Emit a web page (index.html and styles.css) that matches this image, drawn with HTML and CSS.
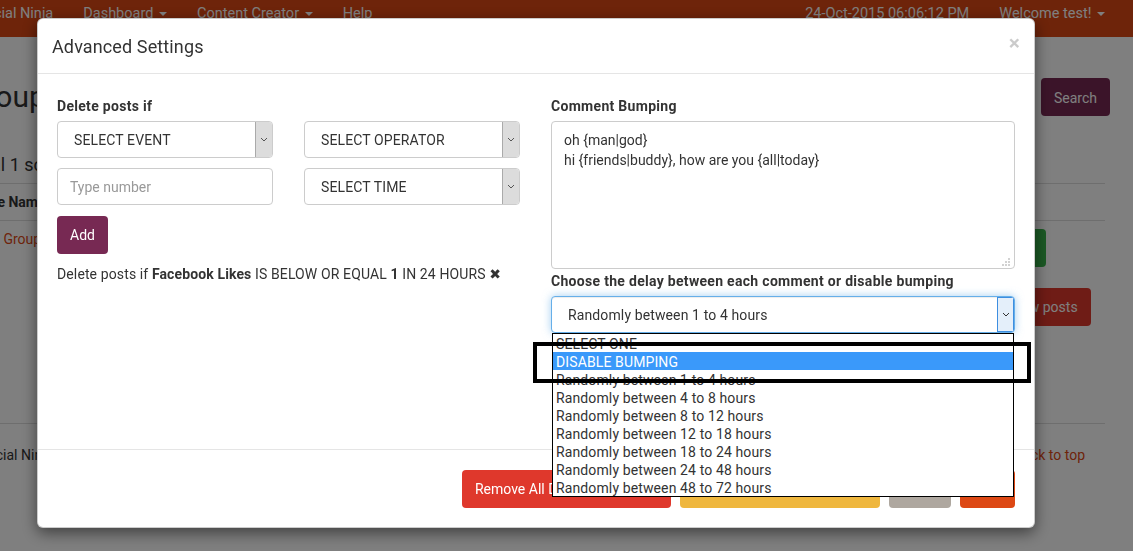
FILE: index.html
```html
<!DOCTYPE html>
<html lang="en">
<head>
  <meta charset="UTF-8">
  <meta name="viewport" content="width=device-width, initial-scale=1.0">
  <title>Social Ninja - Groups</title>
  <link rel="stylesheet" href="styles.css">
</head>
<body>

<div class="page">
  <nav class="navbar">
    <a class="brand">Social Ninja</a>
    <ul class="nav">
      <li><a>Dashboard <span class="caret"></span></a></li>
      <li><a>Content Creator <span class="caret"></span></a></li>
      <li><a>Help</a></li>
    </ul>
    <ul class="nav nav-right">
      <li><a>24-Oct-2015 06:06:12 PM</a></li>
      <li><a>Welcome test! <span class="caret"></span></a></li>
    </ul>
  </nav>

  <div class="container">
    <div class="title-row">
      <h1>Group</h1>
      <div class="search">
        <input type="text" placeholder="Search groups...">
        <button class="btn btn-purple">Search</button>
      </div>
    </div>

    <p class="total">Total 1 schedule found</p>

    <div class="table">
      <div class="thead">
        <div class="cell">Page Name</div>
        <div class="cell">Schedule</div>
        <div class="cell">Status</div>
        <div class="cell">Edit</div>
      </div>
      <div class="trow">
        <div class="cell"><a>Test Group</a></div>
        <div class="cell">Every 2 hours</div>
        <div class="cell">Running</div>
        <div class="cell actions">
          <button class="btn btn-green">Edit</button>
          <button class="btn btn-red">View posts</button>
        </div>
      </div>
    </div>

    <footer class="footer">
      <span>&copy; Social Ninja</span>
      <a>Back to top</a>
    </footer>
  </div>
</div>

<div class="backdrop"></div>

<div class="modal">
  <div class="modal-header">
    <h4>Advanced Settings</h4>
    <button class="close">&times;</button>
  </div>

  <div class="modal-body">
    <div class="col">
      <label class="field-label">Delete posts if</label>
      <div class="rule-grid">
        <div class="select">
          <span class="value">SELECT EVENT</span>
          <span class="arrow"><svg width="8" height="5" viewBox="0 0 8 5"><path d="M1 1l3 3 3-3" fill="none" stroke="#555" stroke-width="1"/></svg></span>
        </div>
        <div class="select">
          <span class="value">SELECT OPERATOR</span>
          <span class="arrow"><svg width="8" height="5" viewBox="0 0 8 5"><path d="M1 1l3 3 3-3" fill="none" stroke="#555" stroke-width="1"/></svg></span>
        </div>
        <input class="input" type="text" placeholder="Type number">
        <div class="select">
          <span class="value">SELECT TIME</span>
          <span class="arrow"><svg width="8" height="5" viewBox="0 0 8 5"><path d="M1 1l3 3 3-3" fill="none" stroke="#555" stroke-width="1"/></svg></span>
        </div>
      </div>
      <button class="btn btn-purple btn-add">Add</button>
      <p class="rule">Delete posts if <b>Facebook Likes</b> IS BELOW OR EQUAL <b>1</b> IN 24 HOURS <span class="remove">&#10006;</span></p>
    </div>

    <div class="col">
      <label class="field-label">Comment Bumping</label>
      <div class="textarea-wrap">
        <textarea class="textarea">oh {man|god}
hi {friends|buddy}, how are you {all|today}</textarea>
        <svg class="grip" width="8" height="8" viewBox="0 0 8 8">
          <circle cx="7" cy="1" r="0.8"/><circle cx="4" cy="4" r="0.8"/><circle cx="7" cy="4" r="0.8"/>
          <circle cx="1" cy="7" r="0.8"/><circle cx="4" cy="7" r="0.8"/><circle cx="7" cy="7" r="0.8"/>
        </svg>
      </div>
      <label class="field-label delay-label">Choose the delay between each comment or disable bumping</label>
      <div class="dropdown">
        <div class="select focused">
          <span class="value">Randomly between 1 to 4 hours</span>
          <span class="arrow"><svg width="8" height="5" viewBox="0 0 8 5"><path d="M1 1l3 3 3-3" fill="none" stroke="#333" stroke-width="1"/></svg></span>
        </div>
        <ul class="options">
          <li>SELECT ONE</li>
          <li class="active">DISABLE BUMPING</li>
          <li>Randomly between 1 to 4 hours</li>
          <li>Randomly between 4 to 8 hours</li>
          <li>Randomly between 8 to 12 hours</li>
          <li>Randomly between 12 to 18 hours</li>
          <li>Randomly between 18 to 24 hours</li>
          <li>Randomly between 24 to 48 hours</li>
          <li>Randomly between 48 to 72 hours</li>
        </ul>
      </div>
    </div>
  </div>

  <div class="modal-footer">
    <button class="btn btn-red">Remove All Delete Conditions</button>
    <button class="btn btn-yellow">Remove Comment Bumping</button>
    <button class="btn btn-gray">Close</button>
    <button class="btn btn-orange">Save</button>
  </div>

  <div class="callout"></div>
</div>

</body>
</html>
```

FILE: styles.css
```css
* {
  box-sizing: border-box;
}
html, body {
  margin: 0;
  height: 100%;
}
body {
  font-family: Roboto, "Open Sans", sans-serif;
  font-size: 14px;
  line-height: 20px;
  color: #333;
  background: #fff;
  overflow: hidden;
}
a {
  color: #dd4814;
  text-decoration: none;
}
ul {
  margin: 0;
  padding: 0;
  list-style: none;
}

/* page behind the modal */
.navbar {
  display: flex;
  align-items: flex-start;
  height: 37px;
  padding: 1px 13px 0 0;
  background: #dd4814;
  font-size: 14.5px;
  line-height: 26px;
}
.navbar a {
  color: #fff;
  display: block;
  padding: 0 15px;
}
.brand {
  margin-left: -38px;
}
.nav {
  display: flex;
}
.nav-right {
  margin-left: auto;
}
.caret {
  display: inline-block;
  width: 0;
  height: 0;
  margin-left: 2px;
  vertical-align: middle;
  border-top: 4px solid;
  border-left: 4px solid transparent;
  border-right: 4px solid transparent;
}

.container {
  margin: 0 28px 0 -35px;
}
.title-row {
  display: flex;
  justify-content: space-between;
  align-items: center;
  margin-top: 41px;
  height: 37px;
}
.title-row h1 {
  margin: 0;
  font-size: 30px;
  font-weight: 400;
  line-height: 37px;
}
.search {
  display: flex;
  gap: 8px;
  margin-right: -5px;
}
.search input {
  width: 220px;
  border: 1px solid #ccc;
  border-radius: 4px;
  padding: 0 12px;
  font: inherit;
}
.search .btn {
  padding-top: 10px;
  padding-bottom: 8px;
}
.total {
  margin: 40px 0 8px;
  font-size: 18px;
}
.table {
  border-top: 1px solid #ddd;
}
.thead,
.trow {
  display: grid;
  grid-template-columns: 2fr 1fr 1fr 117px;
  border-bottom: 1px solid #ddd;
}
.thead {
  font-weight: 700;
}
.trow {
  min-height: 203px;
}
.cell {
  padding: 8px;
}
.actions {
  display: flex;
  flex-direction: column;
  align-items: flex-start;
  gap: 21px;
}
.footer {
  display: flex;
  justify-content: space-between;
  padding: 21px 20px 0 0;
}

/* buttons */
.btn {
  font: inherit;
  line-height: 20px;
  padding: 9px 13px;
  border: none;
  border-radius: 4px;
  color: #fff;
  cursor: pointer;
}
.btn-purple { background: #772953; }
.btn-green  { background: #38b44a; }
.btn-red    { background: #df382c; }
.btn-yellow { background: #efb73e; }
.btn-gray   { background: #aea79f; }
.btn-orange { background: #dd4814; }

.backdrop {
  position: fixed;
  inset: 0;
  background: rgba(0, 0, 0, 0.5);
}

/* modal */
.modal {
  position: fixed;
  top: 18px;
  left: 37px;
  width: 998px;
  background: #fff;
  border: 1px solid rgba(0, 0, 0, 0.2);
  border-radius: 6px;
  box-shadow: 0 5px 15px rgba(0, 0, 0, 0.5);
  letter-spacing: 0.12px;
}
.modal-header {
  display: flex;
  justify-content: space-between;
  align-items: center;
  padding: 15px 14px 14px;
  border-bottom: 1px solid #e5e5e5;
}
.modal-header h4 {
  margin: 0;
  font-size: 18px;
  font-weight: 400;
  line-height: 25px;
}
.close {
  background: none;
  border: none;
  padding: 0;
  font-family: inherit;
  font-size: 21px;
  font-weight: 700;
  line-height: 1;
  color: #000;
  opacity: 0.2;
  margin-top: -6px;
}
.modal-body {
  display: grid;
  grid-template-columns: 463px 1fr;
  column-gap: 31px;
  align-items: start;
  height: 375px;
  padding: 22px 19px 20px;
}
.field-label {
  display: block;
  font-weight: 700;
  letter-spacing: 0.3px;
  margin-bottom: 5px;
}
.rule-grid {
  display: grid;
  grid-template-columns: 1fr 1fr;
  column-gap: 31px;
  row-gap: 10px;
}
.select {
  display: flex;
  align-items: stretch;
  height: 37px;
  border: 1px solid #ccc;
  border-radius: 4px;
  background: #fff;
  overflow: hidden;
}
.select .value {
  flex: 1;
  align-self: center;
  padding-left: 16px;
  white-space: nowrap;
}
.select .arrow {
  display: flex;
  align-items: center;
  justify-content: center;
  width: 17px;
  background: #dcdcdc;
  border-left: 1px solid #aaa;
}
.input {
  height: 37px;
  border: 1px solid #ccc;
  border-radius: 4px;
  padding: 0 12px;
  font: inherit;
  color: #333;
}
.input::placeholder {
  color: #999;
}
.btn-add {
  margin-top: 11px;
}
.rule {
  margin: 10px 0 0;
}
.remove {
  font-family: "DejaVu Sans", sans-serif;
  font-size: 14px;
}

.textarea-wrap {
  position: relative;
}
.textarea {
  display: block;
  width: 100%;
  height: 148px;
  border: 1px solid #ccc;
  border-radius: 4px;
  padding: 8px 12px;
  font: inherit;
  line-height: 20px;
  color: #333;
  resize: none;
}
.grip {
  position: absolute;
  right: 5px;
  bottom: 3px;
  fill: #999;
}
.delay-label {
  margin-top: 2px;
}
.dropdown {
  position: relative;
}
.select.focused {
  border-color: #66afe9;
  box-shadow: inset 0 1px 1px rgba(0, 0, 0, 0.075), 0 0 8px rgba(102, 175, 233, 0.6);
}
.select.focused .arrow {
  background: #e4effa;
  border: 1px solid #3d8ee0;
}
.options {
  position: absolute;
  top: 100%;
  left: 1px;
  right: 1px;
  background: #fff;
  border: 1px solid #000;
  line-height: 18px;
  z-index: 2;
}
.options li {
  padding: 1px 3px 0;
  height: 18px;
  white-space: nowrap;
}
.options li.active {
  background: #3a99fa;
  color: #fff;
}

.modal-footer {
  display: flex;
  justify-content: flex-end;
  gap: 9px;
  padding: 20px 19px 19px;
  border-top: 1px solid #e5e5e5;
}
.modal-footer .btn-red {
  letter-spacing: 0;
  padding: 9px 12.5px;
}
.modal-footer .btn-gray {
  padding: 9px 13.5px;
}
.modal-footer .btn-orange {
  padding: 9px 12.5px;
}

/* screenshot annotation box */
.callout {
  position: absolute;
  left: 495px;
  top: 323px;
  width: 498px;
  height: 41px;
  border: 4px solid #000;
  z-index: 3;
}
```
